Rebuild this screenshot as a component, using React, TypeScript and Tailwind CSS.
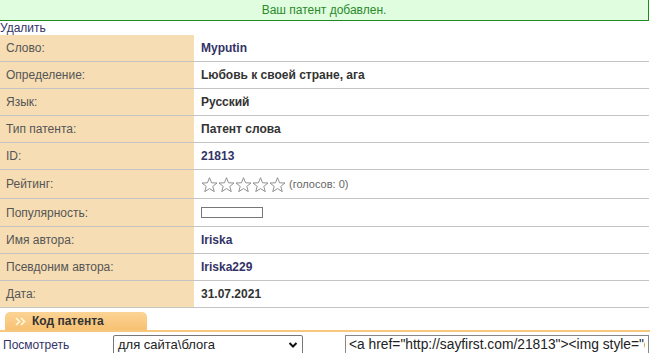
import React from 'react';

type Row = { label: string; value: React.ReactNode; h?: string };

function Stars() {
  return (
    <div className="flex items-center">
      {[0, 1, 2, 3, 4].map((i) => (
        <svg key={i} width="17" height="15" viewBox="0 0 24 22">
          <polygon
            points="12,1 15,8.5 23,8.8 16.8,13.8 19,21.5 12,17 5,21.5 7.2,13.8 1,8.8 9,8.5"
            fill="#fff"
            stroke="#8a8a8a"
            strokeWidth="1.4"
            strokeLinejoin="round"
          />
        </svg>
      ))}
      <span className="ml-[3px] text-[11px] text-[#666]">(голосов: 0)</span>
    </div>
  );
}

export default function App() {
  const link = 'font-bold text-[#333366]';
  const plain = 'font-bold text-[#333]';
  const rows: Row[] = [
    { label: 'Слово:', value: <span className={link}>Myputin</span> },
    { label: 'Определение:', value: <span className={plain}>Lюбовь к своей стране, ага</span> },
    { label: 'Язык:', value: <span className={plain}>Русский</span> },
    { label: 'Тип патента:', value: <span className={plain}>Патент слова</span> },
    { label: 'ID:', value: <span className={link}>21813</span> },
    { label: 'Рейтинг:', value: <Stars />, h: 'h-[29px]' },
    {
      label: 'Популярность:',
      value: <div className="w-[62px] h-[11px] border border-[#777] bg-white" />,
      h: 'h-[28px]',
    },
    { label: 'Имя автора:', value: <span className={link}>Iriska</span> },
    { label: 'Псевдоним автора:', value: <span className={link}>Iriska229</span> },
    { label: 'Дата:', value: <span className={plain}>31.07.2021</span> },
  ];

  return (
    <div className="w-[650px] h-[353px] overflow-hidden bg-white font-['Liberation_Sans',Arial,sans-serif] text-[12px]">
      <div className="w-[649px] h-[21px] bg-[#e0fde0] border-b border-r border-[#1e8a1e] flex items-center justify-center text-[#2a8a2a]">
        Ваш патент добавлен.
      </div>
      <div className="h-[14px] leading-[14px] text-[#333366]">Удалить</div>

      <div className="w-[649px]">
        {rows.map((r) => (
          <div key={r.label} className={`flex ${r.h ?? 'h-[27px]'} border-b border-[#c4c4c4]`}>
            <div className="w-[194px] bg-[#f6ddb4] pl-[6px] flex items-center text-[#555]">{r.label}</div>
            <div className="flex-1 pl-[7px] flex items-center">{r.value}</div>
          </div>
        ))}
      </div>

      <div className="pt-[4px] pl-[5px]">
        <div className="w-[142px] h-[18px] rounded-t-[5px] bg-gradient-to-b from-[#fbd494] to-[#f7c173] flex items-center pl-[10px]">
          <svg width="11" height="9" viewBox="0 0 11 9" className="mr-[6px]">
            <path d="M1 1 L4.5 4.5 L1 8 M6 1 L9.5 4.5 L6 8" fill="none" stroke="#fff8dc" strokeWidth="1.6" />
          </svg>
          <span className="font-bold text-[#333]">Код патента</span>
        </div>
      </div>
      <div className="h-[2px] bg-[#f5c87e]" />

      <div className="flex items-start pt-[3px]">
        <div className="w-[113px] pl-[3px] pt-[1px] text-[#333366]">Посмотреть</div>
        <div className="w-[190px] h-[20px] border border-[#777] rounded-[2px] flex items-center justify-between px-[4px] text-[13px] text-[#222]">
          <span>для сайта\блога</span>
          <svg width="10" height="8" viewBox="0 0 10 8">
            <path d="M1.5 2 L5 5.5 L8.5 2" fill="none" stroke="#111" strokeWidth="2" />
          </svg>
        </div>
        <input
          readOnly
          value={'<a href="http://sayfirst.com/21813"><img style="display:block" src="http://sayfirst.com/img/21813.png"></a>'}
          className="ml-[42px] w-[304px] h-[20px] border border-[#888] px-[3px] text-[13.8px] text-[#222] outline-none font-['Liberation_Sans',Arial,sans-serif]"
        />
      </div>
    </div>
  );
}
